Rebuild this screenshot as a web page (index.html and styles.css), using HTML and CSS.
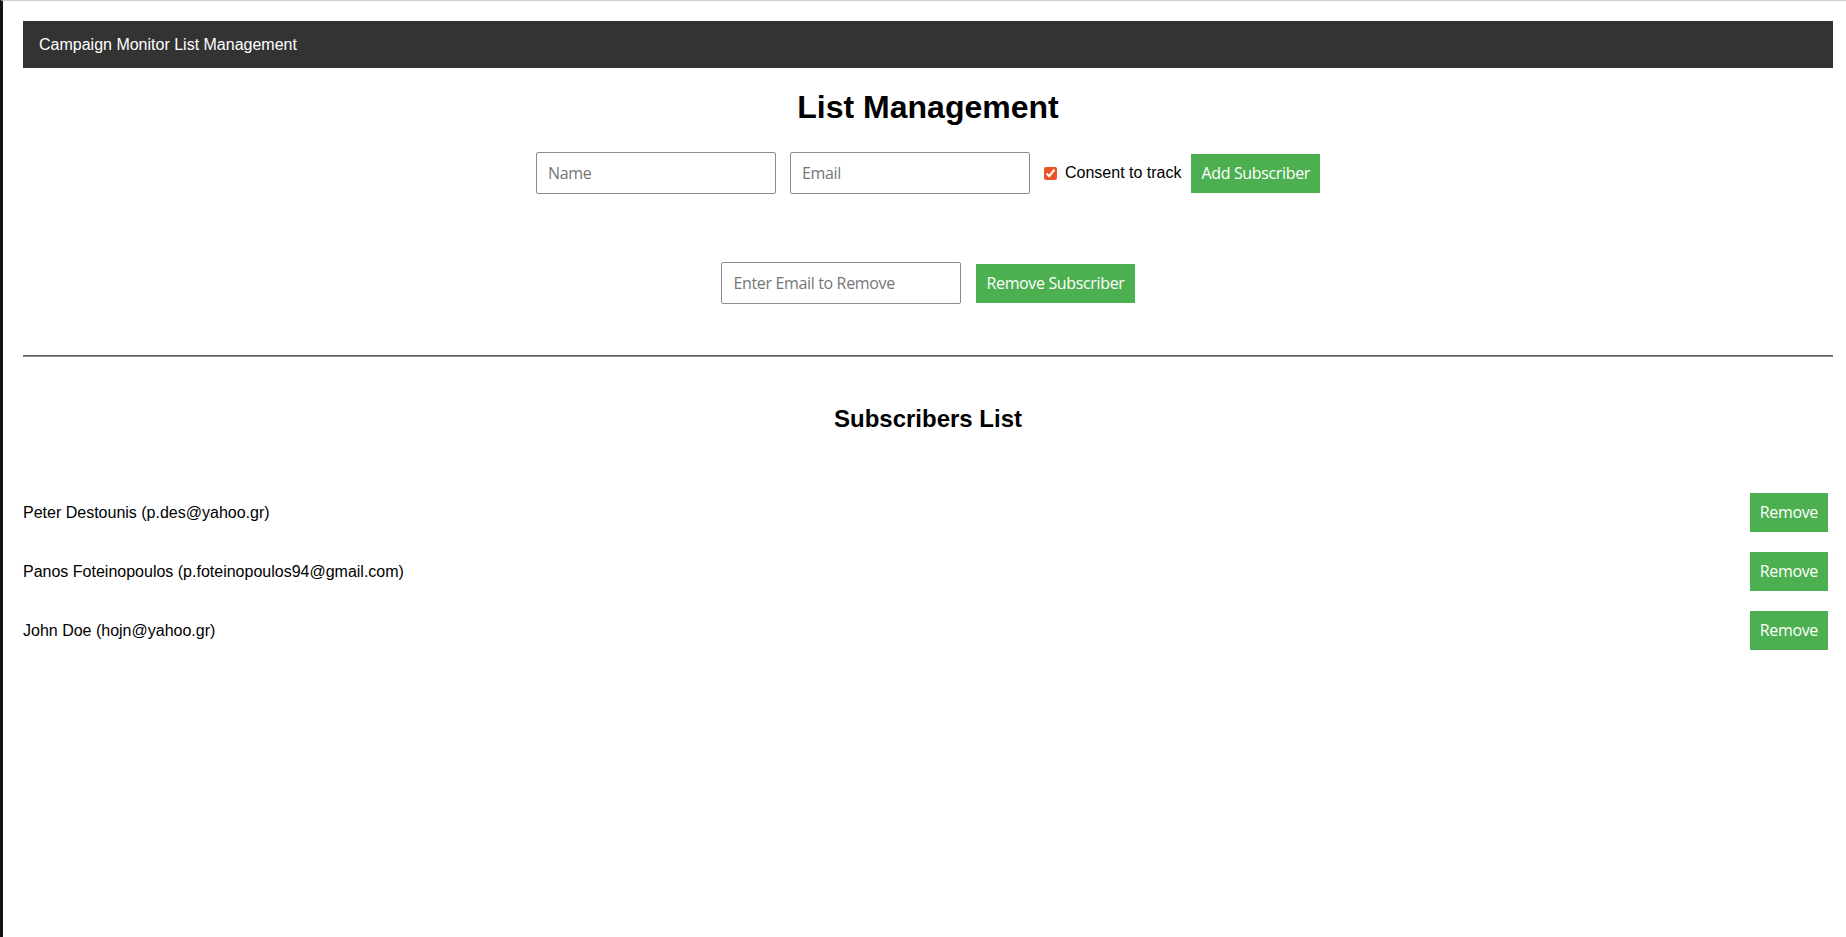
FILE: index.html
```html
<!DOCTYPE html>
<html lang="en">
<head>
<meta charset="utf-8">
<title>Campaign Monitor List Management</title>
<link rel="stylesheet" href="styles.css">
</head>
<body>
  <header class="topbar">Campaign Monitor List Management</header>
  <main class="content">
    <h1 class="title">List Management</h1>
    <form class="row add-form">
      <input class="field" type="text" placeholder="Name">
      <input class="field field-gap" type="email" placeholder="Email">
      <label class="consent"><input class="check" type="checkbox" checked><span>Consent to track</span></label>
      <button class="btn" type="button">Add Subscriber</button>
    </form>
    <form class="row remove-form">
      <input class="field" type="email" placeholder="Enter Email to Remove">
      <button class="btn btn-gap" type="button">Remove Subscriber</button>
    </form>
    <hr class="divider">
    <h2 class="subtitle">Subscribers List</h2>
    <ul class="list">
      <li class="item"><span>Peter Destounis (p.des@yahoo.gr)</span><button class="btn" type="button">Remove</button></li>
      <li class="item"><span>Panos Foteinopoulos (p.foteinopoulos94@gmail.com)</span><button class="btn" type="button">Remove</button></li>
      <li class="item"><span>John Doe (hojn@yahoo.gr)</span><button class="btn" type="button">Remove</button></li>
    </ul>
  </main>
</body>
</html>
```

FILE: styles.css
```css
html, body {
  height: 100%;
}
body {
  margin: 0;
  box-sizing: border-box;
  min-height: 100vh;
  border-left: 3px solid #141414;
  border-top: 1px solid #cfcfcf;
  padding: 20px 13px 0 20px;
  font-family: "Liberation Sans", Arial, sans-serif;
  font-size: 16px;
  color: #000;
  background: #fff;
}
.topbar {
  background: #333;
  color: #fff;
  padding: 15px 16px;
  line-height: 17px;
  font-size: 16px;
}
.title {
  margin: 21px 0 26px;
  font-size: 32px;
  line-height: 37px;
  font-weight: bold;
  text-align: center;
}
.row {
  display: flex;
  justify-content: center;
  align-items: center;
  margin: 0;
}
.remove-form {
  margin-top: 68px;
}
.field {
  box-sizing: border-box;
  width: 240px;
  height: 42px;
  padding: 0 10px 0 11px;
  border: 1px solid #8b8b97;
  border-radius: 2px;
  font-family: "Open Sans", sans-serif;
  font-size: 16px;
  letter-spacing: -0.35px;
  color: #000;
  margin: 0;
}
.field::placeholder {
  color: #767676;
}
.field-gap {
  margin-left: 14px;
}
.consent {
  display: flex;
  align-items: center;
  margin-left: 14px;
  margin-right: 10px;
  font-size: 16px;
}
.check {
  width: 13px;
  height: 13px;
  margin: 0 8px 0 0;
  accent-color: #e95420;
}
.btn {
  background: #4caf50;
  color: #fff;
  border: none;
  padding: 10px 10px;
  line-height: 19px;
  font-family: "Open Sans", sans-serif;
  font-size: 16px;
  letter-spacing: -0.35px;
  cursor: pointer;
}
.btn-gap {
  margin-left: 15px;
}
.divider {
  margin: 51px 0 0;
  height: 0;
  border: 0;
  border-top: 1px solid #5e5e5e;
  border-bottom: 1px solid #8e8e8e;
}
.subtitle {
  margin: 48px 0 0;
  font-size: 24px;
  line-height: 28px;
  font-weight: bold;
  text-align: center;
}
.list {
  list-style: none;
  margin: 50px 0 0;
  padding: 0;
}
.item {
  display: flex;
  justify-content: space-between;
  align-items: center;
  padding: 10px 5px 10px 0;
}
```
